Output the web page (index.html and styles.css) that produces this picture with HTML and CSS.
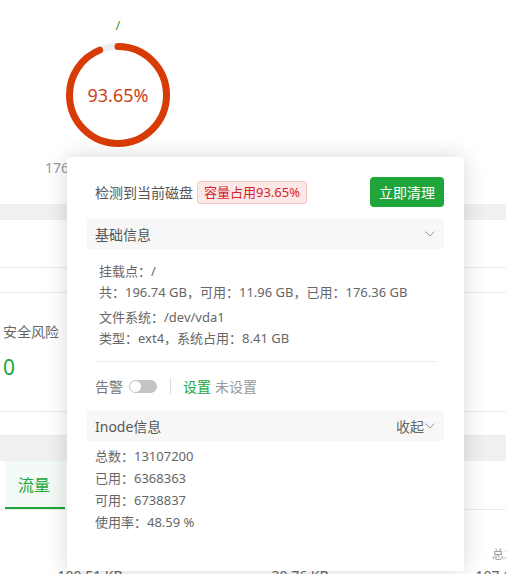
FILE: index.html
```html
<!DOCTYPE html>
<html lang="zh-CN">
<head>
<meta charset="utf-8">
<title>磁盘</title>
<link rel="stylesheet" href="styles.css">
</head>
<body>
<div class="page">
  <section class="disk-top">
    <div class="disk">
      <div class="mount">/</div>
      <div class="ring">
        <svg width="104" height="104" viewBox="0 0 104 104">
          <circle cx="52" cy="52" r="48.5" fill="none" stroke="#eceef3" stroke-width="7"/>
          <circle cx="52" cy="52" r="48.5" fill="none" stroke="#d93b06" stroke-width="7" stroke-linecap="round" stroke-dasharray="285.38 304.73" transform="rotate(-90 52 52)"/>
        </svg>
        <span class="ring-text">93.65%</span>
      </div>
      <div class="size">176.36 GB / 196.74 GB</div>
    </div>
  </section>
  <div class="band"></div>
  <div class="row r1"></div>
  <div class="row r2"></div>
  <div class="risk">
    <div class="risk-label">安全风险</div>
    <div class="risk-value">0</div>
  </div>
  <div class="row r3"></div>
  <div class="band band2"></div>
  <div class="tabs"><div class="tab active">流量</div></div>
  <div class="traffic">
    <div class="tcol"><div class="tlabel">上行</div><div class="tval">100.51 KB</div></div>
    <div class="tcol"><div class="tlabel">下行</div><div class="tval">20.76 KB</div></div>
    <div class="tcol"><div class="tlabel">总发送</div><div class="tval">107.65 MB</div></div>
  </div>

  <div class="popup">
    <div class="pop-head">
      <span class="pop-title">检测到当前磁盘</span>
      <span class="tag">容量占用93.65%</span>
      <button class="btn">立即清理</button>
    </div>
    <div class="sec-head">
      <span>基础信息</span>
      <svg class="chev" width="12" height="8" viewBox="0 0 12 8"><path d="M1.5 1.5l4.5 4.5 4.5-4.5" fill="none" stroke="#999" stroke-width="1"/></svg>
    </div>
    <div class="basic">
      <div class="group">
        <div>挂载点：/</div>
        <div>共：196.74 GB，可用：11.96 GB，已用：176.36 GB</div>
      </div>
      <div class="group">
        <div>文件系统：/dev/vda1</div>
        <div>类型：ext4，系统占用：8.41 GB</div>
      </div>
    </div>
    <div class="divider"></div>
    <div class="alert">
      <span>告警</span>
      <span class="switch"><span class="knob"></span></span>
      <span class="vsep"></span>
      <span class="link">设置</span>
      <span class="muted">未设置</span>
    </div>
    <div class="sec-head inode-head">
      <span>Inode信息</span>
      <span class="fold">收起<svg class="chev" width="12" height="8" viewBox="0 0 12 8"><path d="M1.5 1.5l4.5 4.5 4.5-4.5" fill="none" stroke="#999" stroke-width="1"/></svg></span>
    </div>
    <div class="inode">
      <div>总数：13107200</div>
      <div>已用：6368363</div>
      <div>可用：6738837</div>
      <div>使用率：48.59 %</div>
    </div>
  </div>
</div>
</body>
</html>
```
FILE: styles.css
```css
* { box-sizing: border-box; }
html, body { margin: 0; padding: 0; background: #fff; }
body {
  font-family: "Noto Sans", "Noto Sans CJK SC", sans-serif;
  color: #666;
  font-size: 13px;
}
.page {
  position: relative;
  width: 506px;
  height: 574px;
  overflow: hidden;
}
.disk-top { height: 204px; padding-top: 17px; }
.disk { width: 160px; margin-left: 38px; text-align: center; }
.mount { color: #20a53a; font-size: 13px; line-height: 16px; height: 16px; margin-bottom: 10px; }
.ring { position: relative; width: 104px; height: 104px; margin: 0 auto; }
.ring svg { display: block; }
.ring-text {
  position: absolute; left: 0; right: 0; top: 50%;
  transform: translateY(-50%);
  text-align: center; font-size: 18px; color: #cf3c16; line-height: 24px;
}
.size { margin-top: 11px; line-height: 20px; font-size: 14px; color: #999; white-space: nowrap; margin-left: -20px; margin-right: -20px; }

.band { height: 16px; background: #f0f0f0; }
.band2 { height: 25px; }
.row { border-bottom: 1px solid #ebebeb; }
.r1 { height: 48px; }
.r2 { height: 25px; }
.r3 { height: 24px; }
.risk { height: 119px; border-bottom: 1px solid #ebebeb; padding: 29px 0 0 3px; }
.risk-label { font-size: 14px; line-height: 20px; color: #666; }
.risk-value { margin-top: 10px; font-size: 21px; line-height: 30px; color: #20a53a; }

.tabs { height: 49px; border-bottom: 1px solid #ebebeb; display: flex; padding-left: 5px; }
.tab { width: 60px; height: 48px; display: flex; align-items: center; padding-left: 13px; font-size: 16px; }
.tab.active { color: #20a53a; border-bottom: 2px solid #20a53a; background: #f4faf5; }

.traffic { display: grid; grid-template-columns: 180px 240px 180px; width: 600px; padding-top: 36px; text-align: center; }
.tlabel { font-size: 12px; line-height: 18px; color: #999; }
.tval { margin-top: 2px; font-size: 14px; line-height: 20px; color: #666; }

.popup {
  position: absolute;
  left: 67px; top: 157px;
  width: 397px;
  background: #fff;
  border-radius: 4px;
  box-shadow: 0 0 22px rgba(0, 0, 0, 0.16);
  padding: 20px 20px 38px 20px;
}
.pop-head { display: flex; align-items: center; height: 30px; }
.pop-title { margin-left: 8px; font-size: 14px; color: #555; }
.tag {
  margin-left: 4px;
  height: 23px; line-height: 21px;
  padding: 0 6px;
  border: 1px solid #f6c6c6;
  background: #fde8e8;
  color: #d5242a;
  border-radius: 3px;
  font-size: 13px;
}
.btn {
  margin-left: auto;
  width: 74px; height: 30px;
  border: none; border-radius: 4px;
  background: #20a53a; color: #fff;
  font-family: inherit; font-size: 14px;
  padding: 0;
}
.sec-head {
  margin-top: 12px;
  height: 30px;
  background: #f7f7f7;
  display: flex; align-items: center; justify-content: space-between;
  padding: 0 8px;
  font-size: 14px; color: #555;
}
.chev { display: block; }
.basic { padding: 12px 0 0 12px; line-height: 21px; }
.group + .group { margin-top: 4px; }
.divider { margin: 12px 8px 0; height: 1px; background: #ececec; }
.alert { margin-top: 12px; height: 24px; display: flex; align-items: center; padding-left: 8px; font-size: 14px; color: #777; }
.switch { margin-left: 6px; width: 28px; height: 13px; border-radius: 7px; background: #c4c4c4; position: relative; display: inline-block; }
.knob { position: absolute; left: 1px; top: 1px; width: 11px; height: 11px; border-radius: 50%; background: #fff; }
.vsep { margin-left: 13px; width: 1px; height: 16px; background: #dcdcdc; }
.link { margin-left: 12px; color: #20a53a; }
.muted { margin-left: 4px; color: #999; }
.inode-head { margin-top: 13px; }
.fold { display: flex; align-items: center; color: #666; }
.inode { padding: 4px 0 0 8px; line-height: 22px; }
```
